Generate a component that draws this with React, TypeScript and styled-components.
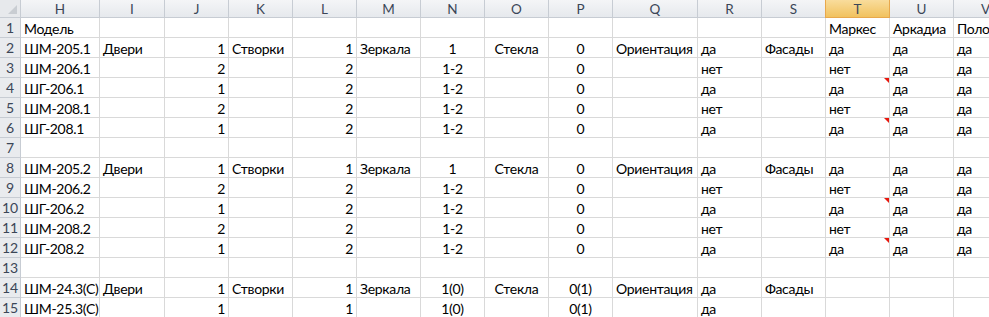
import * as React from "react";
import styled, { createGlobalStyle, css } from "styled-components";

const GlobalStyle = createGlobalStyle`
  html, body {
    margin: 0;
    padding: 0;
    background: #fff;
    overflow: hidden;
  }
  body {
    font-family: Lato, "Liberation Sans", sans-serif;
  }
`;

const columns = [
  { name: "H", width: 79, align: "left" },
  { name: "I", width: 65, align: "left" },
  { name: "J", width: 64, align: "right" },
  { name: "K", width: 64, align: "left" },
  { name: "L", width: 64, align: "right" },
  { name: "M", width: 64, align: "left" },
  { name: "N", width: 64, align: "center" },
  { name: "O", width: 64, align: "center" },
  { name: "P", width: 64, align: "center" },
  { name: "Q", width: 85, align: "left" },
  { name: "R", width: 64, align: "left" },
  { name: "S", width: 64, align: "left" },
  { name: "T", width: 64, align: "left" },
  { name: "U", width: 64, align: "left" },
  { name: "V", width: 64, align: "left" },
] as const;

type Align = "left" | "right" | "center";

const ACTIVE_COL = "T";

const head = ["Двери", "1", "Створки", "1", "Зеркала"];
const block = (n: string): string[][] => [
  [`ШМ-205.${n}`, ...head, "1", "Стекла", "0", "Ориентация", "да", "Фасады", "да", "да", "да"],
  [`ШМ-206.${n}`, "", "2", "", "2", "", "1-2", "", "0", "", "нет", "", "нет", "да", "да"],
  [`ШГ-206.${n}`, "", "1", "", "2", "", "1-2", "", "0", "", "да", "", "да", "да", "да"],
  [`ШМ-208.${n}`, "", "2", "", "2", "", "1-2", "", "0", "", "нет", "", "нет", "да", "да"],
  [`ШГ-208.${n}`, "", "1", "", "2", "", "1-2", "", "0", "", "да", "", "да", "да", "да"],
];
const empty = (): string[] => columns.map(() => "");

const rows: string[][] = [
  ["Модель", "", "", "", "", "", "", "", "", "", "", "", "Маркес", "Аркадиа", "Поло"],
  ...block("1"),
  empty(),
  ...block("2"),
  empty(),
  ["ШМ-24.3(С)", ...head, "1(0)", "Стекла", "0(1)", "Ориентация", "да", "Фасады", "", "", ""],
  ["ШМ-25.3(С)", "", "1", "", "1", "", "1(0)", "", "0(1)", "", "да", "", "", "", ""],
];

// cells carrying a note: "row:col"
const notes = new Set(["4:T", "6:T", "10:T", "12:T"]);

const Sheet = styled.div`
  display: grid;
  grid-template-columns: 21px ${columns.map((c) => `${c.width}px`).join(" ")};
  grid-template-rows: 18px;
  grid-auto-rows: 20px;
  width: max-content;
  font-size: 14px;
  color: #000;
`;

const headerBase = css`
  box-sizing: border-box;
  display: flex;
  align-items: center;
  justify-content: center;
  background: linear-gradient(#f4f5f7, #e6e9ed);
  color: #3b4657;
  font-size: 13.5px;
  border-right: 1px solid #c7ccd3;
  border-bottom: 1px solid #c7ccd3;
`;

const Corner = styled.div`
  ${headerBase};
  position: relative;
  background: #e7e9ec;
  &::after {
    content: "";
    position: absolute;
    right: 3px;
    bottom: 3px;
    border-style: solid;
    border-width: 0 0 9px 9px;
    border-color: transparent transparent #c9cdd2 transparent;
  }
`;

const ColHead = styled.div<{ $active?: boolean }>`
  ${headerBase};
  padding-top: 1px;
  ${(p) =>
    p.$active &&
    css`
      background: linear-gradient(#f9dc9c, #f1c25e);
      border-right-color: #e8a84c;
      border-bottom-color: #e8a84c;
      border-left: 1px solid #e8a84c;
      margin-left: -1px;
    `}
`;

const RowHead = styled.div`
  ${headerBase};
  background: #e9ebee;
  font-size: 14px;
`;

const Cell = styled.div<{ $align: Align }>`
  position: relative;
  box-sizing: border-box;
  display: flex;
  align-items: center;
  justify-content: ${(p) =>
    p.$align === "right" ? "flex-end" : p.$align === "center" ? "center" : "flex-start"};
  padding: 1px 3px 0 3px;
  border-right: 1px solid #d9d9d9;
  border-bottom: 1px solid #d9d9d9;
  letter-spacing: -0.3px;
  white-space: nowrap;
  overflow: hidden;
`;

const NoteMark = styled.span`
  position: absolute;
  top: 0;
  right: 0;
  border-style: solid;
  border-width: 0 5px 5px 0;
  border-color: transparent #e8160c transparent transparent;
`;

export default function App() {
  return (
    <>
      <GlobalStyle />
      <Sheet>
        <Corner />
        {columns.map((c) => (
          <ColHead key={c.name} $active={c.name === ACTIVE_COL}>
            {c.name}
          </ColHead>
        ))}
        {rows.map((row, r) => (
          <React.Fragment key={r}>
            <RowHead>{r + 1}</RowHead>
            {columns.map((c, i) => (
              <Cell key={c.name} $align={c.align}>
                {row[i]}
                {notes.has(`${r + 1}:${c.name}`) && <NoteMark />}
              </Cell>
            ))}
          </React.Fragment>
        ))}
      </Sheet>
    </>
  );
}
